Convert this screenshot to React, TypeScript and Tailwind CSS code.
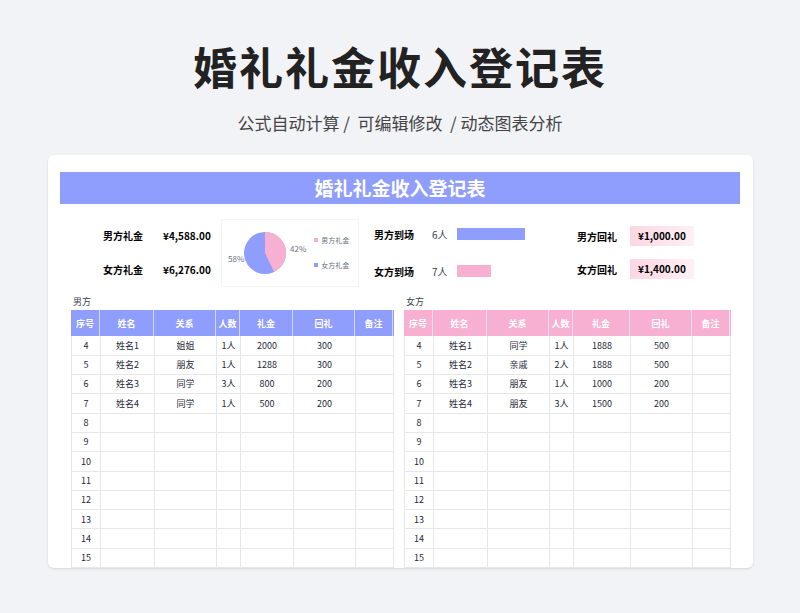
const F = { fontFamily: '"Noto Sans CJK SC", "Noto Sans", sans-serif' };

const cols = ["w-[29px]", "w-[54px]", "w-[62px]", "w-[24px]", "w-[53px]", "w-[62px]", "w-[38px]"];
const colsR = ["w-[29px]", "w-[54px]", "w-[62px]", "w-[24px]", "w-[57px]", "w-[62px]", "w-[38px]"];
const heads = ["序号", "姓名", "关系", "人数", "礼金", "回礼", "备注"];

function Table({ label, color, widths, data }: { label: string; color: string; widths: string[]; data: string[][] }) {
  const rows: string[][] = [];
  for (let i = 4; i <= 15; i++) {
    const d = data[i - 4];
    rows.push([String(i), ...(d ?? ["", "", "", "", "", ""])]);
  }
  return (
    <div className="flex flex-col">
      <div className="text-[9px] text-gray-700 h-[17px] leading-[17px] pl-[2px]">{label}</div>
      <div className={`flex h-[26px] ${color}`}>
        {heads.map((h, i) => (
          <div key={h} className={`${widths[i]} shrink-0 flex items-center justify-center text-[9px] font-bold text-white border-r border-white/60`}>{h}</div>
        ))}
      </div>
      {rows.map((r, ri) => (
        <div key={ri} className="flex h-[19.3px] border-b border-gray-200 border-l">
          {r.map((c, i) => (
            <div key={i} className={`${widths[i]} shrink-0 flex items-center justify-center text-[9px] text-gray-800 border-r border-gray-200`}>{c}</div>
          ))}
        </div>
      ))}
    </div>
  );
}

export default function App() {
  return (
    <div className="w-[800px] h-[613px] bg-[#f2f3f7] overflow-hidden flex flex-col items-center" style={F}>
      <h1 className="mt-[38px] text-[44px] font-bold text-[#222] leading-[56px] tracking-[2px]">婚礼礼金收入登记表</h1>
      <p className="mt-[17px] text-[17px] text-[#444] leading-[24px]">公式自动计算 /&nbsp; 可编辑修改 &nbsp;/ 动态图表分析</p>
      <div className="mt-[20px] w-[705px] h-[413px] bg-white rounded-[6px] shadow-sm overflow-hidden flex flex-col items-center">
        <div className="mt-[17px] w-[680px] h-[33px] bg-[#8f9dfc] flex items-center justify-center text-white text-[19px] font-bold">婚礼礼金收入登记表</div>
        <div className="w-[680px] flex items-center h-[76px] mt-[12px]">
          <div className="w-[163px] flex flex-col gap-[19px] pl-[43px] text-[10px]">
            <div className="flex"><span className="font-bold w-[60px]">男方礼金</span><span className="font-bold">¥4,588.00</span></div>
            <div className="flex"><span className="font-bold w-[60px]">女方礼金</span><span className="font-bold">¥6,276.00</span></div>
          </div>
          <div className="w-[138px] h-[68px] border border-gray-100 ml-[-2px] flex items-center relative">
            <span className="absolute left-[6px] top-[33px] text-[8px] text-gray-500">58%</span>
            <svg width="44" height="44" viewBox="-22 -22 44 44" className="ml-[21px]">
              <circle r="21" fill="#8f9dfc" />
              <path d="M0 0 L0 -21 A21 21 0 0 1 9.2 18.9 Z" fill="#f7b0d2" />
            </svg>
            <span className="ml-[3px] mt-[-8px] text-[8px] text-gray-500">42%</span>
            <div className="ml-[8px] flex flex-col gap-[14px] text-[7px] text-gray-500">
              <span className="flex items-center gap-[3px]"><i className="w-[4px] h-[4px] bg-[#f7b0d2]" />男方礼金</span>
              <span className="flex items-center gap-[3px]"><i className="w-[4px] h-[4px] bg-[#8f9dfc]" />女方礼金</span>
            </div>
          </div>
          <div className="w-[200px] flex flex-col gap-[22px] pl-[15px] text-[10px]">
            <div className="flex items-center"><span className="font-bold w-[58px]">男方到场</span><span className="w-[25px] text-gray-700">6人</span><span className="w-[68px] h-[12px] bg-[#8f9dfc]" /></div>
            <div className="flex items-center"><span className="font-bold w-[58px]">女方到场</span><span className="w-[25px] text-gray-700">7人</span><span className="w-[34px] h-[12px] bg-[#f7b0d2]" /></div>
          </div>
          <div className="flex flex-col gap-[13px] pl-[18px] text-[10px]">
            <div className="flex items-center"><span className="font-bold w-[53px]">男方回礼</span><span className="font-bold px-[8px] h-[20px] leading-[20px] bg-gradient-to-r from-[#fcd6e4] to-[#fff0f5]">¥1,000.00</span></div>
            <div className="flex items-center"><span className="font-bold w-[53px]">女方回礼</span><span className="font-bold px-[8px] h-[20px] leading-[20px] bg-gradient-to-r from-[#fcd6e4] to-[#fff0f5]">¥1,400.00</span></div>
          </div>
        </div>
        <div className="w-[660px] flex gap-[10px] mt-[4px] ml-[2px]">
          <Table label="男方" color="bg-[#8f9dfc]" widths={cols} data={[["姓名1", "姐姐", "1人", "2000", "300", ""], ["姓名2", "朋友", "1人", "1288", "300", ""], ["姓名3", "同学", "3人", "800", "200", ""], ["姓名4", "同学", "1人", "500", "200", ""]]} />
          <Table label="女方" color="bg-[#f7b0d2]" widths={colsR} data={[["姓名1", "同学", "1人", "1888", "500", ""], ["姓名2", "亲戚", "2人", "1888", "500", ""], ["姓名3", "朋友", "1人", "1000", "200", ""], ["姓名4", "朋友", "3人", "1500", "200", ""]]} />
        </div>
      </div>
    </div>
  );
}
